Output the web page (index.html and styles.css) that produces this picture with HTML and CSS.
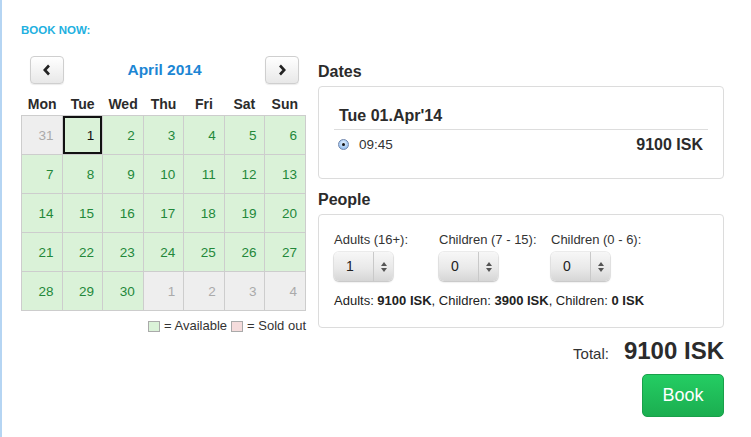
FILE: index.html
```html
<!DOCTYPE html>
<html>
<head>
<meta charset="utf-8">
<link rel="stylesheet" href="styles.css">
</head>
<body>
<div class="page">
  <div class="book-now">BOOK NOW:</div>
  <div class="main">
    <div class="cal">
      <div class="cal-head">
        <div class="nav-btn"><svg width="10" height="12" viewBox="0 0 10 12"><path d="M7 1.5 L2.8 6 L7 10.5" fill="none" stroke="#222" stroke-width="2.6" stroke-linejoin="miter"/></svg></div>
        <div class="cal-title">April 2014</div>
        <div class="nav-btn"><svg width="10" height="12" viewBox="0 0 10 12"><path d="M3 1.5 L7.2 6 L3 10.5" fill="none" stroke="#222" stroke-width="2.6" stroke-linejoin="miter"/></svg></div>
      </div>
      <div class="weekdays">
        <div>Mon</div><div>Tue</div><div>Wed</div><div>Thu</div><div>Fri</div><div>Sat</div><div>Sun</div>
      </div>
      <div class="grid">
        <div class="day off">31</div><div class="day sel">1</div><div class="day">2</div><div class="day">3</div><div class="day">4</div><div class="day">5</div><div class="day">6</div>
        <div class="day">7</div><div class="day">8</div><div class="day">9</div><div class="day">10</div><div class="day">11</div><div class="day">12</div><div class="day">13</div>
        <div class="day">14</div><div class="day">15</div><div class="day">16</div><div class="day">17</div><div class="day">18</div><div class="day">19</div><div class="day">20</div>
        <div class="day">21</div><div class="day">22</div><div class="day">23</div><div class="day">24</div><div class="day">25</div><div class="day">26</div><div class="day">27</div>
        <div class="day">28</div><div class="day">29</div><div class="day">30</div><div class="day off">1</div><div class="day off">2</div><div class="day off">3</div><div class="day off">4</div>
      </div>
      <div class="legend">
        <span class="swatch avail"></span><span class="legend-text">= Available</span>
        <span class="swatch sold"></span><span class="legend-text">= Sold out</span>
      </div>
    </div>
    <div class="side">
      <h3 class="heading">Dates</h3>
      <div class="box dates">
        <div class="date-title">Tue 01.Apr'14</div>
        <div class="time-row">
          <span class="radio"><span class="dot"></span></span>
          <span class="time">09:45</span>
          <span class="price">9100 ISK</span>
        </div>
      </div>
      <h3 class="heading people-h">People</h3>
      <div class="box people">
        <div class="fields">
          <div class="field f1">
            <div class="label">Adults (16+):</div>
            <div class="select"><span class="val">1</span><span class="arrows"><span class="up"></span><span class="down"></span></span></div>
          </div>
          <div class="field f2">
            <div class="label">Children (7 - 15):</div>
            <div class="select"><span class="val">0</span><span class="arrows"><span class="up"></span><span class="down"></span></span></div>
          </div>
          <div class="field f3">
            <div class="label">Children (0 - 6):</div>
            <div class="select"><span class="val">0</span><span class="arrows"><span class="up"></span><span class="down"></span></span></div>
          </div>
        </div>
        <div class="summary">Adults: <b>9100 ISK</b>, Children: <b>3900 ISK</b>, Children: <b>0 ISK</b></div>
      </div>
      <div class="total"><span class="total-label">Total:</span><span class="total-val">9100 ISK</span></div>
      <div class="actions"><button class="book">Book</button></div>
    </div>
  </div>
</div>
</body>
</html>
```

FILE: styles.css
```css
* { box-sizing: border-box; }
html, body { margin: 0; padding: 0; background: #fff; }
body {
  font-family: "Liberation Sans", Arial, sans-serif;
  color: #333;
  width: 751px;
  height: 437px;
  overflow: hidden;
}
.page {
  border-left: 2px solid #b5d5f3;
  padding-left: 19px;
  height: 437px;
}
.book-now {
  padding-top: 23px;
  font-size: 11.5px;
  line-height: 14px;
  font-weight: bold;
  color: #22b0e0;
  margin-bottom: 19px;
}
.main { display: flex; }
.cal { width: 285px; }
.cal-head {
  display: flex;
  align-items: center;
  justify-content: space-between;
  height: 28px;
  padding: 0 7px 0 9px;
}
.nav-btn {
  width: 34px;
  height: 28px;
  border: 1px solid #cfcfcf;
  border-radius: 4px;
  background: linear-gradient(#ffffff, #e8e8e8);
  box-shadow: 0 1px 1px rgba(0,0,0,0.08);
  display: flex;
  align-items: center;
  justify-content: center;
}
.cal-title {
  font-size: 15.5px;
  font-weight: bold;
  color: #1c86d4;
}
.weekdays {
  display: grid;
  grid-template-columns: repeat(7, 1fr);
  margin-top: 10px;
  line-height: 21px;
  font-size: 14px;
  font-weight: bold;
  color: #2b2b2b;
  text-align: center;
  padding: 0 1px;
}
.grid {
  display: grid;
  grid-template-columns: repeat(7, 1fr);
  grid-auto-rows: 38px;
  gap: 1px;
  padding: 1px;
  background: #cdcdcd;
  height: 196px;
}
.day {
  background: #daf2d8;
  color: #23883a;
  font-size: 13.5px;
  display: flex;
  align-items: center;
  justify-content: flex-end;
  padding-right: 8px;
}
.day.off { background: #eeeeee; color: #aaaaaa; }
.day.sel { color: #111; box-shadow: inset 0 0 0 2px #111; }
.legend {
  display: flex;
  justify-content: flex-end;
  align-items: center;
  margin-top: 7px;
  line-height: 16px;
  font-size: 13px;
  color: #333;
}
.swatch {
  width: 12px;
  height: 11px;
  border: 1px solid #aaa;
  margin-right: 4px;
}
.swatch.avail { background: #daf2d8; }
.swatch.sold { background: #f5dcdc; margin-left: 4px; }
.side {
  width: 406px;
  margin-left: 12px;
  padding-top: 7px;
}
.heading {
  margin: 0 0 5px 0;
  font-size: 16px;
  line-height: 18px;
  font-weight: bold;
  color: #2b2b2b;
}
.people-h { margin-top: 12px; }
.box {
  border: 1px solid #dcdcdc;
  border-radius: 4px;
}
.dates { padding: 20px 15px 19px; height: 93px; }
.date-title {
  font-size: 16px;
  font-weight: bold;
  line-height: 18px;
  padding: 0 5px 4px;
  border-bottom: 1px solid #dddddd;
  color: #2b2b2b;
}
.time-row {
  display: flex;
  align-items: center;
  height: 29px;
  padding: 0 5px 0 4px;
}
.radio {
  width: 11px;
  height: 11px;
  border-radius: 50%;
  border: 1px solid #6f86ad;
  background: radial-gradient(circle at 50% 35%, #e4f1ff 0%, #9cc3ef 70%, #7aa7de 100%);
  display: flex;
  align-items: center;
  justify-content: center;
}
.dot { width: 3px; height: 3px; border-radius: 50%; background: #111; }
.time { margin-left: 10px; font-size: 13.5px; color: #333; }
.price { margin-left: auto; font-size: 16px; font-weight: bold; color: #2b2b2b; }
.people { padding: 17px 15px 18px; height: 114px; }
.fields { display: flex; }
.f1 { width: 105px; }
.f2 { width: 112px; }
.label { font-size: 13px; line-height: 16px; color: #333; }
.select {
  margin-top: 4px;
  width: 59px;
  height: 29px;
  border-radius: 5px;
  background: linear-gradient(#f7f7f7, #e9e9e9 55%, #d6d6d6);
  box-shadow: 0 0 0 1px rgba(0,0,0,0.07), 0 1px 2px rgba(0,0,0,0.2);
  display: flex;
  align-items: center;
}
.val {
  width: 40px;
  height: 29px;
  line-height: 29px;
  padding-left: 12px;
  font-size: 14px;
  color: #222;
  border-right: 1px solid #c9c9c9;
}
.arrows {
  flex: 1;
  display: flex;
  flex-direction: column;
  align-items: center;
  justify-content: center;
  gap: 2px;
}
.up {
  width: 0; height: 0;
  border-left: 3px solid transparent;
  border-right: 3px solid transparent;
  border-bottom: 4px solid #555;
}
.down {
  width: 0; height: 0;
  border-left: 3px solid transparent;
  border-right: 3px solid transparent;
  border-top: 4px solid #555;
}
.summary {
  margin-top: 12px;
  font-size: 13px;
  line-height: 16px;
  color: #222;
}
.total {
  margin-top: 9px;
  line-height: 28px;
  display: flex;
  justify-content: flex-end;
  align-items: baseline;
}
.total-label { font-size: 15px; color: #333; margin-right: 15px; }
.total-val { font-size: 24px; font-weight: bold; color: #2b2b2b; }
.actions { display: flex; justify-content: flex-end; margin-top: 6px; }
.book {
  width: 82px;
  height: 43px;
  border: 1px solid #19a04a;
  border-radius: 5px;
  background: linear-gradient(#24cd63, #1bae50);
  color: #fff;
  font-family: "Liberation Sans", Arial, sans-serif;
  font-size: 18px;
  padding: 0;
}
```
